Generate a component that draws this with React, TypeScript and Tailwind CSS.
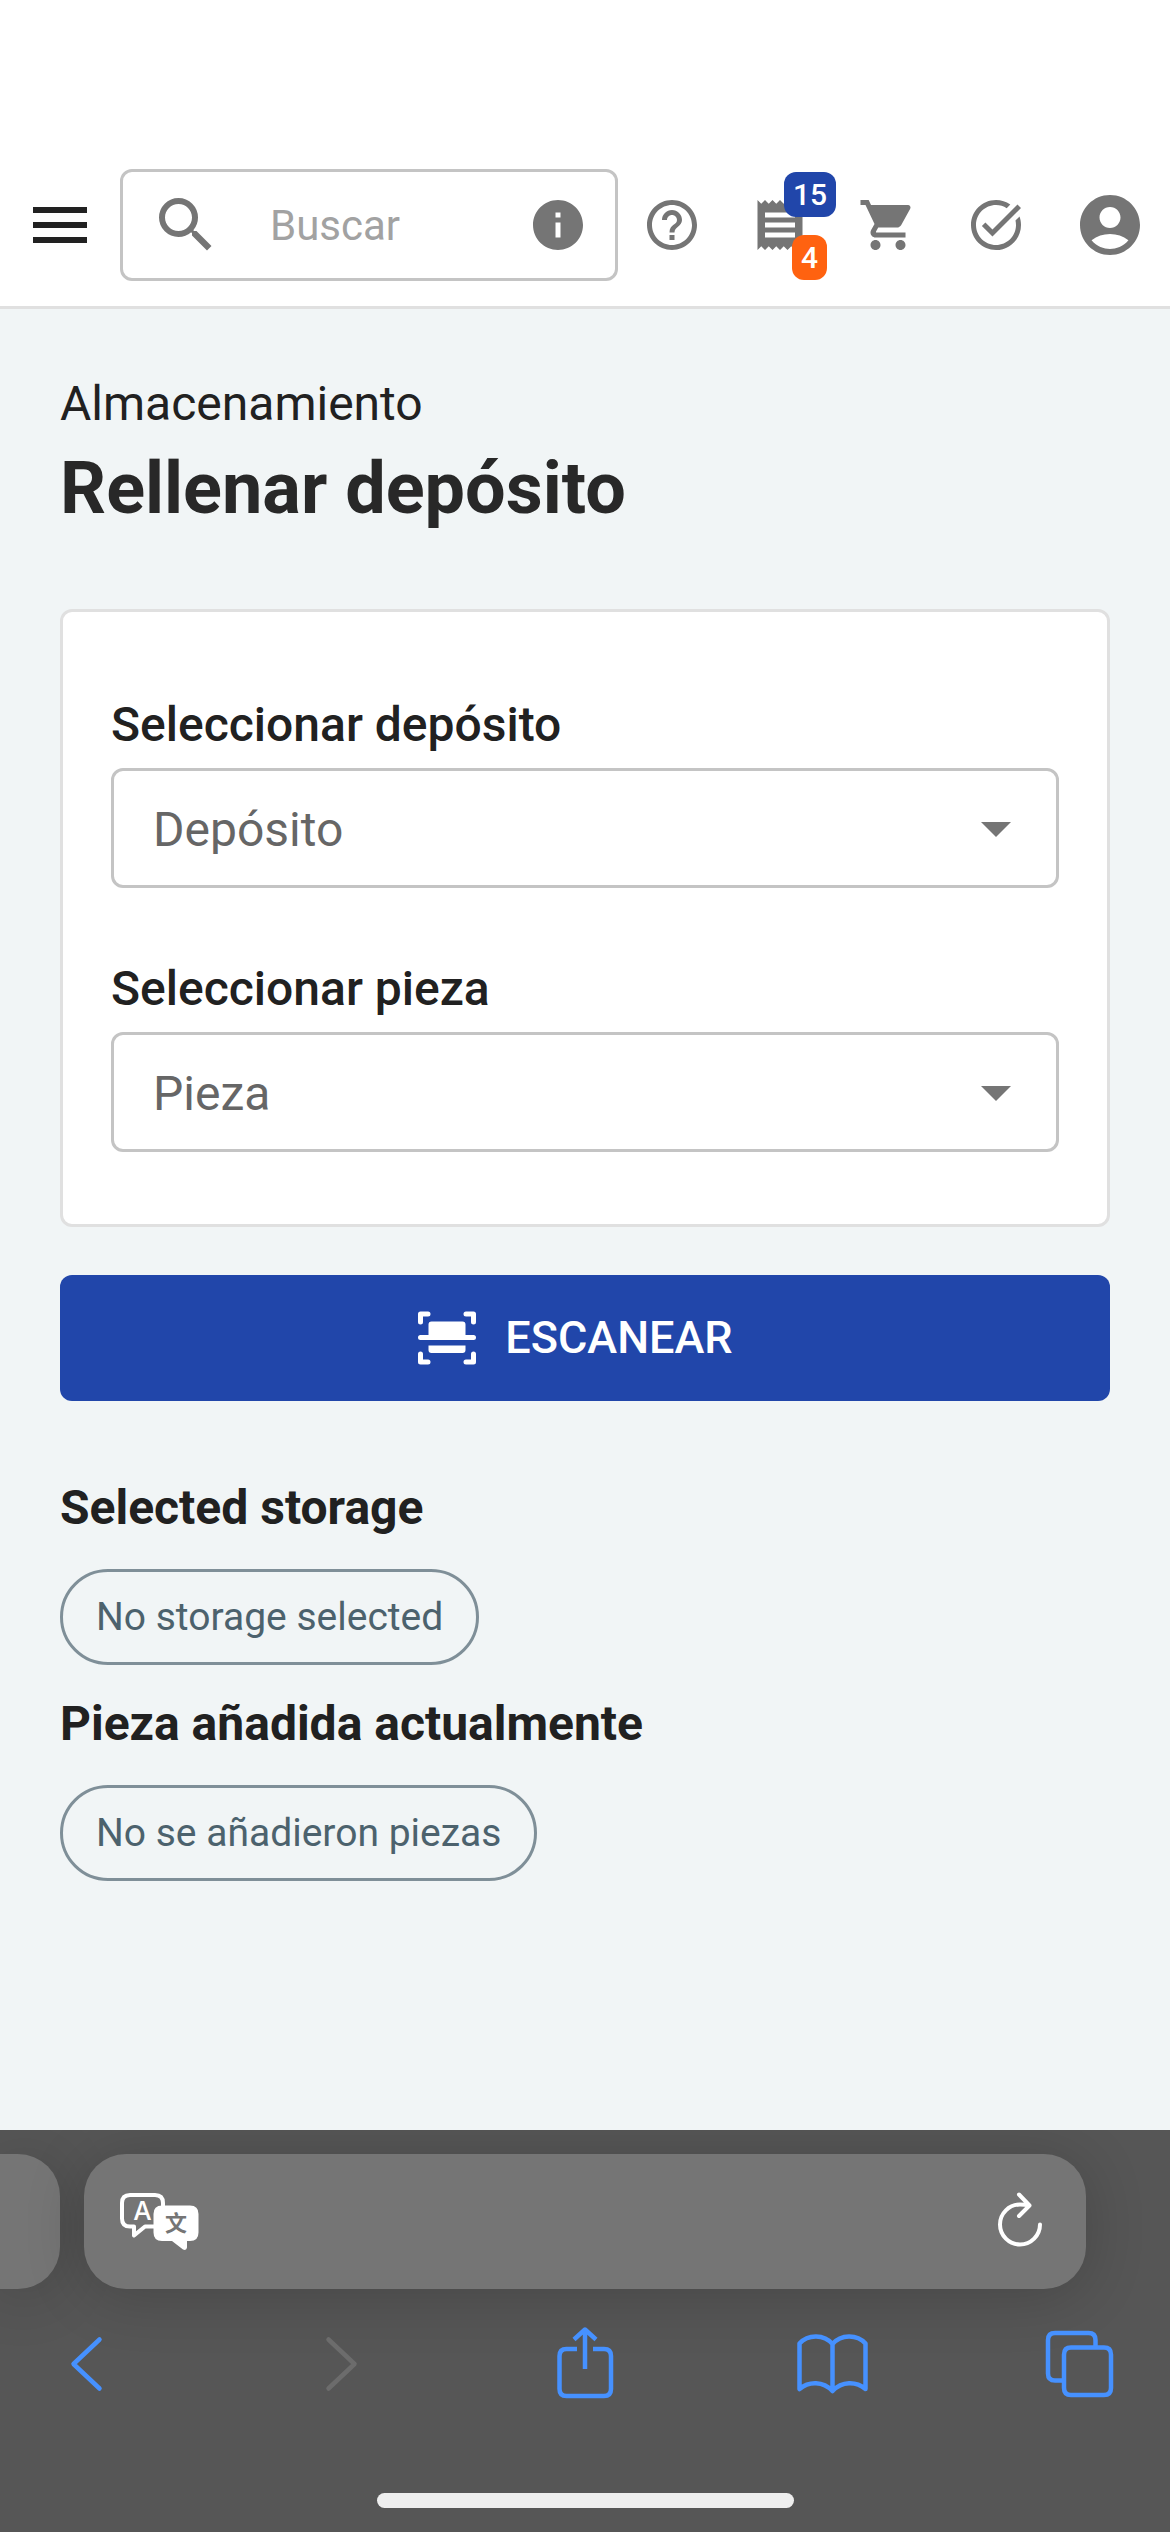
import React, { useState } from "react";
import {
  MdAccountCircle,
  MdArrowDropDown,
  MdHelpOutline,
  MdInfo,
  MdMenu,
  MdOutlineTaskAlt,
  MdReceipt,
  MdSearch,
  MdShoppingCart,
} from "react-icons/md";

interface IconButtonProps {
  label: string;
  children: React.ReactNode;
  disabled?: boolean;
}

const IconButton: React.FC<IconButtonProps> = ({
  label,
  children,
  disabled = false,
}) => (
  <button
    type="button"
    aria-label={label}
    disabled={disabled}
    className="relative flex shrink-0 items-center justify-center"
  >
    {children}
  </button>
);

const Header: React.FC = () => {
  const [query, setQuery] = useState("");

  return (
    <header className="flex items-center gap-6 border-b-3 border-[#e0e0e0] bg-white px-6 pt-[169px] pb-[25px] text-[#757575]">
      <IconButton label="Menú">
        <MdMenu className="size-[72px] text-[#212121]" />
      </IconButton>

      <div className="flex h-28 min-w-0 flex-1 items-center rounded-xl border-3 border-[#c4c4c4] px-[27px]">
        <MdSearch className="size-[72px] shrink-0" />
        <input
          type="search"
          aria-label="Buscar"
          placeholder="Buscar"
          value={query}
          onChange={(e) => setQuery(e.target.value)}
          className="ml-12 w-full min-w-0 flex-1 bg-transparent text-[42px] text-[#212121] outline-none placeholder:text-[#a2a2a2]"
        />
        <IconButton label="Información">
          <MdInfo className="size-[60px]" />
        </IconButton>
      </div>

      <nav className="flex items-center gap-12">
        <IconButton label="Ayuda">
          <MdHelpOutline className="size-[60px]" />
        </IconButton>
        <IconButton label="Pedidos">
          <MdReceipt className="size-[60px]" />
          <span className="absolute -top-[23px] left-[34px] rounded-xl bg-[#2146aa] px-[9px] text-[30px] leading-[45px] font-medium text-white">
            15
          </span>
          <span className="absolute -bottom-[25px] left-[42px] rounded-xl bg-[#ff6210] px-[9px] text-[30px] leading-[45px] font-medium text-white">
            4
          </span>
        </IconButton>
        <IconButton label="Carrito">
          <MdShoppingCart className="size-[60px]" />
        </IconButton>
        <IconButton label="Tareas">
          <MdOutlineTaskAlt className="size-[60px]" />
        </IconButton>
        <IconButton label="Cuenta">
          <MdAccountCircle className="size-[72px]" />
        </IconButton>
      </nav>
    </header>
  );
};

interface SelectFieldProps {
  id: string;
  label: string;
  placeholder: string;
}

const SelectField: React.FC<SelectFieldProps> = ({ id, label, placeholder }) => (
  <div className="flex flex-col gap-[7px]">
    <label htmlFor={id} className="text-5xl leading-[72px] font-medium">
      {label}
    </label>
    <div className="relative">
      <select
        id={id}
        defaultValue=""
        className="h-[120px] w-full appearance-none rounded-xl border-3 border-[#c4c4c4] bg-white px-[39px] pt-[3px] text-5xl text-[#666666]"
      >
        <option value="">{placeholder}</option>
      </select>
      <MdArrowDropDown className="pointer-events-none absolute top-6 right-[27px] size-[72px] text-[#757575]" />
    </div>
  </div>
);

const ScanIcon: React.FC = () => (
  <svg viewBox="0 0 60 54" className="h-[54px] w-[60px]" fill="currentColor">
    <path
      d="M3.500 11V3H11M49 3h7.500v8M3.500 43v8H11M49 51h7.500v-8M3.500 26.500h53"
      fill="none"
      stroke="currentColor"
      strokeWidth="5"
      strokeLinecap="round"
      strokeLinejoin="round"
    />
    <path d="M11.500 27V13.500q0-3 3-3h31q3 0 3 3V27zM11.500 34.500h37V39q0 3-3 3h-31q-3 0-3-3z" />
  </svg>
);

interface SelectionProps {
  title: string;
  value: string;
}

const Selection: React.FC<SelectionProps> = ({ title, value }) => (
  <section className="flex flex-col items-start gap-[25px]">
    <h2 className="text-5xl leading-[72px] font-bold">{title}</h2>
    <span className="flex h-24 items-center rounded-full border-3 border-[#7f8f98] px-[33px] text-[39px] text-[#4c626d]">
      {value}
    </span>
  </section>
);

const TranslateIcon: React.FC = () => (
  <svg viewBox="0 0 78 57" className="h-[57px] w-[78px] overflow-visible">
    <path
      d="M34 33.500H25L14 42.500V33.500H10Q2 33.500 2 25.500V10Q2 2 10 2H35Q43 2 43 10V14"
      fill="none"
      stroke="white"
      strokeWidth="4"
      strokeLinejoin="round"
    />
    <path
      d="M42 12.500H70Q78.500 12.500 78.500 21V39.500Q78.500 48 70 48H67V54.500Q66.500 58 63 56.500L52 48H42Q33.500 48 33.500 39.500V21Q33.500 12.500 42 12.500Z"
      fill="white"
    />
    <text
      x="22.500"
      y="27"
      textAnchor="middle"
      className="fill-white font-['Inter',sans-serif] text-[26px] font-medium"
    >
      A
    </text>
    <text
      x="56"
      y="38"
      textAnchor="middle"
      className="fill-[#757575] font-['Noto_Sans_CJK_SC',sans-serif] text-[22px] font-bold"
    >
      文
    </text>
  </svg>
);

const ReloadIcon: React.FC = () => (
  <svg
    viewBox="0 0 48 60"
    className="h-[60px] w-12"
    fill="none"
    stroke="white"
    strokeWidth="4"
    strokeLinecap="round"
    strokeLinejoin="round"
  >
    <path d="M44 32.500A20 20 0 1 1 24 12.500Q29 12.500 33 13.500M23 2.500L33.500 13.500L23 24" />
  </svg>
);

const toolbarItems = [
  {
    label: "Atrás",
    path: "M44.500 11.500L18.500 36L44.500 60.500",
    color: "text-[#4691ff]",
  },
  {
    label: "Adelante",
    path: "M26.500 11.500L52.500 36L26.500 60.500",
    color: "text-[#6c6c6c]",
    disabled: true,
  },
  {
    label: "Compartir",
    path: "M28 21H17.500Q10.500 21 10.500 28V61Q10.500 68 17.500 68H55Q62 68 62 61V28Q62 21 55 21H44M36 41V1.500M25 11.500L36 1.500L47 11.500",
    color: "text-[#4691ff]",
    butt: true,
  },
  {
    label: "Marcadores",
    path: "M3.500 61V15.500C12 6 28 6 36.500 16C45 6 61 6 69.500 15.500V61C60 53 46 53 36.500 63C27 53 13 53 3.500 61ZM36.500 16V63",
    color: "text-[#4691ff]",
  },
  {
    label: "Pestañas",
    path: "M20 52.500H12Q5 52.500 5 45.500V12Q5 5 12 5H45.500Q52.500 5 52.500 12V18M28 19.500H61Q68 19.500 68 26.500V60Q68 67 61 67H28Q21 67 21 60V26.500Q21 19.500 28 19.500Z",
    color: "text-[#4691ff]",
    butt: true,
  },
];

const BrowserBar: React.FC = () => (
  <footer className="overflow-hidden bg-[#565656] pt-6 pb-6">
    <div className="flex gap-6 pr-[84px]">
      <div className="w-[60px] rounded-r-[42px] bg-[#757575] shadow-[0_6px_60px_rgba(0,0,0,0.18)]" />
      <div className="flex h-[135px] flex-1 items-center justify-between rounded-[42px] bg-[#757575] pr-[42px] pl-9 shadow-[0_6px_60px_rgba(0,0,0,0.18)]">
        <IconButton label="Traducir">
          <TranslateIcon />
        </IconButton>
        <IconButton label="Recargar">
          <ReloadIcon />
        </IconButton>
      </div>
    </div>

    <nav className="mt-[39px] flex justify-between px-[55px]">
      {toolbarItems.map((item) => (
        <IconButton
          key={item.label}
          label={item.label}
          disabled={item.disabled}
        >
          <svg
            viewBox="0 0 72 72"
            className={`size-[72px] overflow-visible ${item.color}`}
            fill="none"
            stroke="currentColor"
            strokeWidth="4.500"
            strokeLinecap={item.butt ? "butt" : "round"}
            strokeLinejoin="round"
          >
            <path d={item.path} />
          </svg>
        </IconButton>
      ))}
    </nav>

    <div className="mx-auto mt-[93px] h-[15px] w-[417px] rounded-full bg-[#eeeeee]" />
  </footer>
);

export default function App() {
  return (
    <div className="flex min-h-screen flex-col bg-[#f1f5f6] font-['Roboto',sans-serif] text-[#212121]">
      <Header />

      <main className="flex-1 px-[60px] pt-[59px] pb-20">
        <p className="text-5xl leading-[72px]">Almacenamiento</p>
        <h1 className="mt-px text-7xl leading-[96px] font-bold text-[#282828]">
          Rellenar depósito
        </h1>

        <div className="mt-[72px] flex flex-col gap-[65px] rounded-xl border-3 border-[#e0e0e0] bg-white px-12 pt-[77px] pb-[72px]">
          <SelectField
            id="storage"
            label="Seleccionar depósito"
            placeholder="Depósito"
          />
          <SelectField
            id="part"
            label="Seleccionar pieza"
            placeholder="Pieza"
          />
        </div>

        <button
          type="button"
          className="mt-12 flex h-[126px] w-full items-center justify-center gap-7 rounded-xl bg-[#2146aa] pr-5 text-[45px] font-medium text-white"
        >
          <ScanIcon />
          ESCANEAR
        </button>

        <div className="mt-[71px] flex flex-col gap-[23px]">
          <Selection title="Selected storage" value="No storage selected" />
          <Selection
            title="Pieza añadida actualmente"
            value="No se añadieron piezas"
          />
        </div>
      </main>

      <BrowserBar />
    </div>
  );
}
